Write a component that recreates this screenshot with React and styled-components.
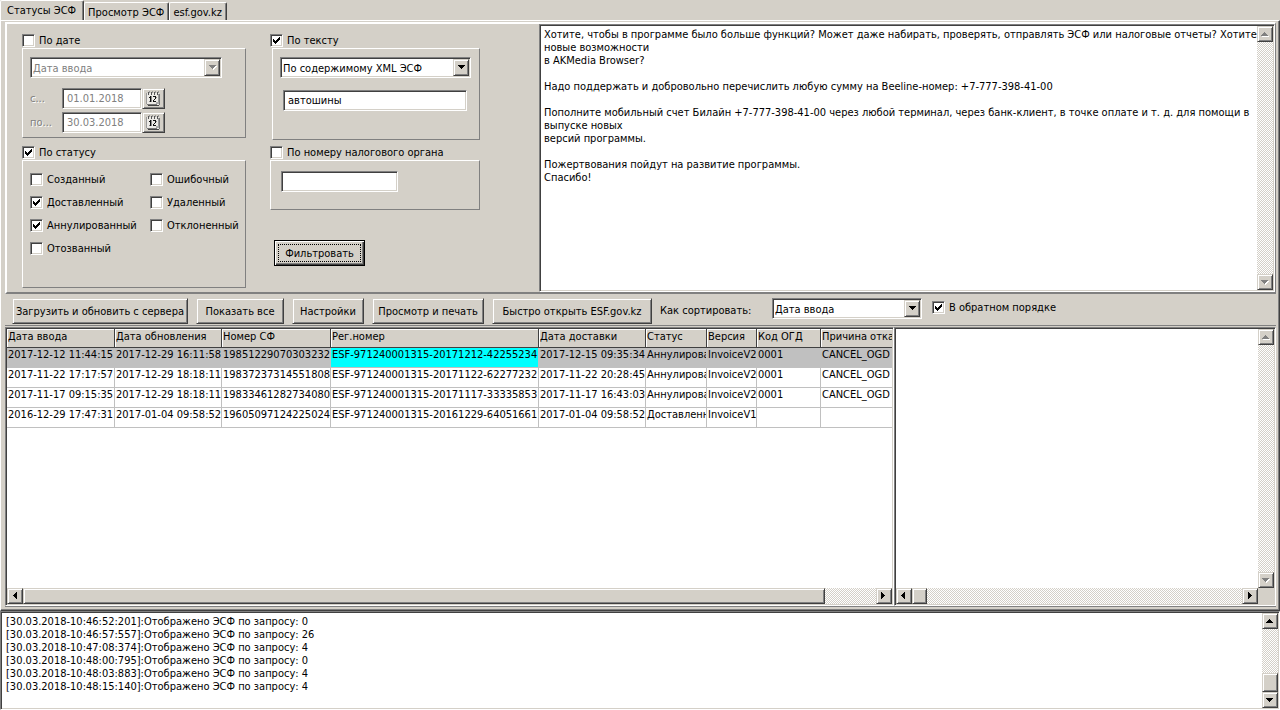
import styled, { createGlobalStyle, css } from 'styled-components';

const face = '#d4d0c8';
const shadow = '#808080';
const dark = '#404040';

const raised = css`
  border: 1px solid;
  border-color: ${face} ${dark} ${dark} ${face};
  box-shadow: inset 1px 1px #fff, inset -1px -1px ${shadow};
`;
const sunken = css`
  border: 1px solid;
  border-color: ${shadow} #fff #fff ${shadow};
  box-shadow: inset 1px 1px ${dark}, inset -1px -1px ${face};
`;

const rows = [
  ['2017-12-12 11:44:15', '2017-12-29 16:11:58', '19851229070303232', 'ESF-971240001315-20171212-42255234', '2017-12-15 09:35:34', 'Аннулированный', 'InvoiceV2', '0001', 'CANCEL_OGD'],
  ['2017-11-22 17:17:57', '2017-12-29 18:18:11', '19837237314551808', 'ESF-971240001315-20171122-62277232', '2017-11-22 20:28:45', 'Аннулированный', 'InvoiceV2', '0001', 'CANCEL_OGD'],
  ['2017-11-17 09:15:35', '2017-12-29 18:18:11', '19833461282734080', 'ESF-971240001315-20171117-33335853', '2017-11-17 16:43:03', 'Аннулированный', 'InvoiceV2', '0001', 'CANCEL_OGD'],
  ['2016-12-29 17:47:31', '2017-01-04 09:58:52', '19605097124225024', 'ESF-971240001315-20161229-64051661', '2017-01-04 09:58:52', 'Доставленный', 'InvoiceV1', '', ''],
];
const columns = [
  ['Дата ввода', 108],
  ['Дата обновления', 107],
  ['Номер СФ', 109],
  ['Рег.номер', 208],
  ['Дата доставки', 107],
  ['Статус', 61],
  ['Версия', 50],
  ['Код ОГД', 64],
  ['Причина отказа', 90],
];
const info = `Хотите, чтобы в программе было больше функций? Может даже набирать, проверять, отправлять ЭСФ или налоговые отчеты? Хотите
новые возможности
в AKMedia Browser?

Надо поддержать и добровольно перечислить любую сумму на Beeline-номер: +7-777-398-41-00

Пополните мобильный счет Билайн +7-777-398-41-00 через любой терминал, через банк-клиент, в точке оплате и т. д. для помощи в
выпуске новых
версий программы.

Пожертвования пойдут на развитие программы.
Спасибо!`;
const log = `[30.03.2018-10:46:52:201]:Отображено ЭСФ по запросу: 0
[30.03.2018-10:46:57:557]:Отображено ЭСФ по запросу: 26
[30.03.2018-10:47:08:374]:Отображено ЭСФ по запросу: 4
[30.03.2018-10:48:00:795]:Отображено ЭСФ по запросу: 0
[30.03.2018-10:48:03:883]:Отображено ЭСФ по запросу: 4
[30.03.2018-10:48:15:140]:Отображено ЭСФ по запросу: 4`;

const arrows = {
  up: '0,4 7,4 7,3 6,3 6,2 5,2 5,1 4,1 4,0 3,0 3,1 2,1 2,2 1,2 1,3 0,3',
  down: '0,0 7,0 7,1 6,1 6,2 5,2 5,3 4,3 4,4 3,4 3,3 2,3 2,2 1,2 1,1 0,1',
  left: '4,0 4,7 3,7 3,6 2,6 2,5 1,5 1,4 0,4 0,3 1,3 1,2 2,2 2,1 3,1 3,0',
  right: '0,0 0,7 1,7 1,6 2,6 2,5 3,5 3,4 4,4 4,3 3,3 3,2 2,2 2,1 1,1 1,0',
};

function Arrow({ dir, disabled }) {
  const tall = dir === 'left' || dir === 'right';
  const w = tall ? 5 : 8;
  const h = tall ? 8 : 5;
  return (
    <svg width={w} height={h} viewBox={`0 0 ${w} ${h}`} shapeRendering="crispEdges" aria-hidden="true">
      {disabled && <polygon points={arrows[dir]} fill="#fff" transform="translate(1 1)" />}
      <polygon points={arrows[dir]} fill={disabled ? shadow : '#000'} />
    </svg>
  );
}

function CalendarIcon() {
  return (
    <svg width="15" height="16" viewBox="0 0 15 16" shapeRendering="crispEdges" aria-hidden="true">
      <path d="M1 2h12v12H1z" fill="#eceae6" />
      <path d="M0 2h1v11H0zM12 3h1v8h-1z" fill="#999" />
      <path d="M13 3h1v11h-1zM1 13h10v1H1z" fill="#777" />
      <path d="M2 14h11v1H2z" fill="#444" />
      <path d="M10 11h3v2h-3z" fill="#aaa" />
      <path d="M2 1h1v3H2zM5 1h1v3H5zM8 1h1v3H8zM11 1h1v3h-1z" fill="#555" />
      <path d="M3 0h1v2H3zM6 0h1v2H6zM9 0h1v2H9zM12 0h1v2h-1z" fill="#999" />
      <path d="M4 5h1v6H4zM3 6h1v1H3zM7 5h3v1H7zM9 6h1v2H9zM8 8h1v1H8zM7 9h1v1H7zM7 10h3v1H7z" fill="#111" />
      <path d="M5 5h1v6H5zM10 6h1v1h-1zM3 10h1v1H3z" fill="#888" />
    </svg>
  );
}

function ScrollBar({ vertical, start, size, disabled }) {
  return (
    <Track $vertical={vertical}>
      <ScrollButton type="button" disabled={disabled} aria-label={vertical ? 'Вверх' : 'Влево'}>
        <Arrow dir={vertical ? 'up' : 'left'} disabled={disabled} />
      </ScrollButton>
      <Rail $vertical={vertical}>
        {size && <Space style={{ flexGrow: start }} />}
        {size && <Thumb style={{ flexGrow: size }} />}
        {size && <Space style={{ flexGrow: 100 - start - size }} />}
      </Rail>
      <ScrollButton type="button" disabled={disabled} aria-label={vertical ? 'Вниз' : 'Вправо'}>
        <Arrow dir={vertical ? 'down' : 'right'} disabled={disabled} />
      </ScrollButton>
    </Track>
  );
}

function Check({ label, checked }) {
  return (
    <CheckLabel>
      <CheckInput type="checkbox" defaultChecked={checked} />
      {label}
    </CheckLabel>
  );
}

function Combo({ id, label, value, width, disabled }) {
  return (
    <ComboBox $width={width}>
      <ComboSelect id={id} aria-label={label} disabled={disabled} defaultValue={value}>
        <option>{value}</option>
      </ComboSelect>
      <ComboArrow>
        <Arrow dir="down" disabled={disabled} />
      </ComboArrow>
    </ComboBox>
  );
}

function DateField({ id, label, value }) {
  return (
    <DateRow>
      <DateLabel htmlFor={id}>{label}</DateLabel>
      <TextInput id={id} $width={80} defaultValue={value} disabled />
      <DateButton type="button" aria-label="Календарь">
        <CalendarIcon />
      </DateButton>
    </DateRow>
  );
}

function App() {
  return (
    <Window>
      <GlobalStyle />
      <Tabs>
        <Tab type="button" $active>Статусы ЭСФ</Tab>
        <Tab type="button">Просмотр ЭСФ</Tab>
        <Tab type="button">esf.gov.kz</Tab>
      </Tabs>
      <Page>
        <TopPanel>
          <Filters>
            <FilterColumn $width={224}>
              <Check label="По дате" />
              <Group $height={90} $gap={8}>
                <Combo label="Дата" value="Дата ввода" width={192} disabled />
                <Dates>
                  <DateField id="from" label="с..." value="01.01.2018" />
                  <DateField id="to" label="по..." value="30.03.2018" />
                </Dates>
              </Group>
              <Check label="По статусу" checked />
              <Group $height={128}>
                <Statuses>
                  <Check label="Созданный" />
                  <Check label="Ошибочный" />
                  <Check label="Доставленный" checked />
                  <Check label="Удаленный" />
                  <Check label="Аннулированный" checked />
                  <Check label="Отклоненный" />
                  <Check label="Отозванный" />
                </Statuses>
              </Group>
            </FilterColumn>
            <FilterColumn $width={210}>
              <Check label="По тексту" checked />
              <Group $height={92} $gap={6} $indent={2}>
                <Combo label="Где искать" value="По содержимому XML ЭСФ" width={191} />
                <TextHolder>
                  <TextInput aria-label="Текст" $width={184} defaultValue="автошины" />
                </TextHolder>
              </Group>
              <Check label="По номеру налогового органа" />
              <Group $height={50}>
                <OfficeHolder>
                  <TextInput aria-label="Номер налогового органа" $width={117} />
                </OfficeHolder>
              </Group>
              <FilterButton type="button">
                <FocusRing>Фильтровать</FocusRing>
              </FilterButton>
            </FilterColumn>
          </Filters>
          <Memo>
            <MemoText aria-label="Сообщение" readOnly defaultValue={info} />
            <ScrollBar vertical disabled />
          </Memo>
        </TopPanel>
        <Toolbar>
          <ToolButton type="button" $width={176}>Загрузить и обновить с сервера</ToolButton>
          <ToolButton type="button" $width={88}>Показать все</ToolButton>
          <ToolButton type="button" $width={72}>Настройки</ToolButton>
          <ToolButton type="button" $width={112}>Просмотр и печать</ToolButton>
          <ToolButton type="button" $width={160}>Быстро открыть ESF.gov.kz</ToolButton>
          <SortLabel htmlFor="sort">Как сортировать:</SortLabel>
          <Combo id="sort" value="Дата ввода" width={150} />
          <OrderHolder>
            <Check label="В обратном порядке" checked />
          </OrderHolder>
        </Toolbar>
        <Split>
          <GridPane>
            <TableArea>
              <Table>
                <colgroup>
                  {columns.map(([name, width]) => <col key={name} style={{ width }} />)}
                </colgroup>
                <thead>
                  <tr>
                    {columns.map(([name]) => <Th key={name}>{name}</Th>)}
                  </tr>
                </thead>
                <tbody>
                  {rows.map((row, i) => (
                    <Tr key={row[2]} $selected={i === 0}>
                      {row.map((cell, j) => <Td key={j} $current={i === 0 && j === 3}>{cell}</Td>)}
                    </Tr>
                  ))}
                </tbody>
              </Table>
            </TableArea>
            <ScrollBar start={0} size={94} />
          </GridPane>
          <DetailPane>
            <DetailBody>
              <MemoText aria-label="Подробности" readOnly />
              <ScrollBar vertical disabled />
            </DetailBody>
            <DetailFoot>
              <ScrollBar start={0} size={4} />
            </DetailFoot>
          </DetailPane>
        </Split>
      </Page>
      <Log>
        <MemoText aria-label="Журнал" readOnly defaultValue={log} $inset={4} />
        <ScrollBar vertical start={72} size={28} />
      </Log>
    </Window>
  );
}

const GlobalStyle = createGlobalStyle`
  * {
    box-sizing: border-box;
  }
  body {
    margin: 0;
    background: ${face};
  }
  body, button, input, select, textarea {
    font-family: "DejaVu Sans Condensed", "DejaVu Sans", sans-serif;
    font-size: 11px;
    line-height: 13px;
    color: #000;
  }
`;
const Window = styled.div`
  display: flex;
  flex-direction: column;
  min-height: 100vh;
  background: ${face};
`;
const Tabs = styled.div`
  display: flex;
  align-items: flex-end;
  height: 20px;
`;
const Tab = styled.button`
  height: ${(p) => (p.$active ? 20 : 18)}px;
  padding: ${(p) => (p.$active ? '0 7px 0 6px' : '2px 4px 0 3px')};
  white-space: nowrap;
  background: ${face};
  border: 1px solid;
  border-color: #fff ${dark} transparent #fff;
  border-bottom: 0;
  border-radius: 2px 2px 0 0;
  box-shadow: inset -1px 0 ${shadow};
`;
const Page = styled.main`
  flex: 1;
  display: flex;
  flex-direction: column;
  padding: 1px 3px 3px 4px;
  border: 1px solid;
  border-color: #fff ${dark} ${dark} #fff;
  box-shadow: inset -1px -1px ${shadow};
`;
const TopPanel = styled.section`
  display: flex;
  height: 272px;
  border: 2px solid;
  border-color: #fff ${shadow} ${shadow} #fff;
  border-right-width: 1px;
`;
const Filters = styled.div`
  flex: 0 0 532px;
  display: flex;
  gap: 24px;
  padding: 10px 0 0 15px;
`;
const FilterColumn = styled.div`
  width: ${(p) => p.$width}px;
`;
const Group = styled.div`
  height: ${(p) => p.$height}px;
  margin: 1px 0 ${(p) => p.$gap || 0}px ${(p) => p.$indent || 0}px;
  padding: 8px 7px;
  border: 1px solid;
  border-color: #fff ${shadow} ${shadow} #fff;
`;
const CheckLabel = styled.label`
  display: flex;
  align-items: center;
  gap: 4px;
  height: 13px;
  white-space: nowrap;
`;
const CheckInput = styled.input`
  appearance: none;
  flex: none;
  width: 13px;
  height: 13px;
  margin: 0;
  background: #fff;
  ${sunken}

  &:checked {
    background: #fff url("data:image/svg+xml,%3Csvg xmlns='http://www.w3.org/2000/svg' width='7' height='7' shape-rendering='crispEdges'%3E%3Cpath d='M0 2h1v1h1v1h1V3h1V2h1V1h1V0h1v3H6v1H5v1H4v1H3v1H2V6H1V5H0z'/%3E%3C/svg%3E") 2px 2px no-repeat;
  }
`;
const ComboBox = styled.div`
  position: relative;
  width: ${(p) => p.$width}px;
  height: 21px;
`;
const ComboSelect = styled.select`
  appearance: none;
  display: block;
  width: 100%;
  height: 21px;
  padding: 1px 18px 0 2px;
  border-radius: 0;
  background: #fff;
  ${sunken}

  &:disabled {
    color: ${shadow};
    opacity: 1;
  }
`;
const ComboArrow = styled.span`
  position: absolute;
  top: 2px;
  right: 2px;
  display: flex;
  align-items: center;
  justify-content: center;
  width: 16px;
  height: 17px;
  padding-left: 1px;
  background: ${face};
  pointer-events: none;
  ${raised}
`;
const TextInput = styled.input`
  width: ${(p) => p.$width}px;
  height: 21px;
  padding: 0 4px;
  background: #fff;
  ${sunken}

  &:disabled {
    color: ${shadow};
  }
`;
const Dates = styled.div`
  display: flex;
  flex-direction: column;
  gap: 3px;
  margin-top: 10px;
`;
const DateRow = styled.div`
  display: flex;
  align-items: center;
`;
const DateLabel = styled.label`
  width: 32px;
  color: ${shadow};
  text-shadow: 1px 1px #fff;
`;
const DateButton = styled.button`
  display: flex;
  align-items: center;
  justify-content: center;
  width: 23px;
  height: 21px;
  padding: 0;
  background: ${face};
  ${raised}
`;
const Statuses = styled.div`
  display: grid;
  grid-template-columns: 116px 1fr;
  gap: 10px 4px;
  padding-top: 4px;
`;
const TextHolder = styled.div`
  padding: 12px 0 0 3px;
`;
const OfficeHolder = styled.div`
  padding: 2px 0 0 3px;
`;
const FilterButton = styled.button`
  display: block;
  width: 91px;
  height: 26px;
  margin: 30px 0 0 4px;
  padding: 2px;
  background: ${face};
  border: 1px solid #000;
  box-shadow: inset 1px 1px #fff, inset -1px -1px ${dark}, inset -2px -2px ${shadow};
`;
const FocusRing = styled.span`
  display: flex;
  align-items: center;
  justify-content: center;
  height: 18px;
  margin: 0 1px;
  border: 1px dotted #000;
`;
const Memo = styled.div`
  flex: 1;
  display: flex;
  min-width: 0;
  padding: 1px;
  background: #fff;
  ${sunken}
`;
const MemoText = styled.textarea`
  flex: 1;
  min-width: 0;
  display: block;
  padding: 2px 0 2px ${(p) => p.$inset || 3}px;
  border: 0;
  resize: none;
  overflow: hidden;
  white-space: pre;
  background: #fff;
  outline: 0;
`;
const Toolbar = styled.div`
  display: flex;
  align-items: flex-start;
  gap: 8px;
  height: 32px;
  padding: 4px 7px 0;
  border-bottom: 1px solid ${shadow};
`;
const ToolButton = styled.button`
  flex: none;
  width: ${(p) => p.$width}px;
  height: 26px;
  padding: 0;
  white-space: nowrap;
  background: ${face};
  ${raised}
`;
const SortLabel = styled.label`
  width: 104px;
  padding-top: 6px;
  white-space: nowrap;
`;
const OrderHolder = styled.div`
  padding: 3px 0 0 2px;
`;
const Split = styled.div`
  flex: 1;
  display: grid;
  grid-template-columns: minmax(0, 888fr) minmax(0, 382fr);
  margin-top: 1px;
  border-bottom: 1px solid ${shadow};
`;
const GridPane = styled.section`
  display: flex;
  flex-direction: column;
  min-width: 0;
  padding: 1px;
  background: #fff;
  ${sunken}
`;
const TableArea = styled.div`
  flex: 1;
  overflow: hidden;
`;
const Table = styled.table`
  width: 904px;
  table-layout: fixed;
  border-collapse: separate;
  border-spacing: 0;
`;
const Th = styled.th`
  height: 19px;
  padding: 1px 0 0 1px;
  overflow: hidden;
  font-weight: normal;
  text-align: left;
  vertical-align: top;
  white-space: nowrap;
  background: ${face};
  border-right: 1px solid ${dark};
  border-bottom: 1px solid ${dark};
  box-shadow: inset 1px 1px #fff;
`;
const Tr = styled.tr`
  background: ${(p) => (p.$selected ? '#c0c0c0' : '#fff')};
`;
const Td = styled.td`
  height: 20px;
  padding: 0 0 0 1px;
  overflow: hidden;
  vertical-align: top;
  white-space: nowrap;
  border-right: 1px solid #c0c0c0;
  border-bottom: 1px solid #c0c0c0;
  ${(p) => p.$current && 'background: #0ff;'}
`;
const DetailPane = styled.section`
  display: flex;
  flex-direction: column;
  min-width: 0;
  padding: 1px;
  background: #fff;
  ${sunken}
`;
const DetailBody = styled.div`
  flex: 1;
  display: flex;
`;
const DetailFoot = styled.div`
  padding-right: 16px;
  background: ${face};
`;
const Log = styled.section`
  display: flex;
  height: 99px;
  padding: 1px;
  background: #fff;
  ${sunken}
`;
const Track = styled.div`
  flex: none;
  display: flex;
  flex-direction: ${(p) => (p.$vertical ? 'column' : 'row')};
  ${(p) => (p.$vertical ? 'width: 16px;' : 'height: 16px;')}
  background: repeating-conic-gradient(#fff 0 25%, ${face} 0 50%) 0 0 / 2px 2px;
`;
const Rail = styled.div`
  flex: 1;
  display: flex;
  flex-direction: ${(p) => (p.$vertical ? 'column' : 'row')};
`;
const Space = styled.div`
  flex-basis: 0;
`;
const Thumb = styled.div`
  flex-basis: 0;
  background: ${face};
  ${raised}
`;
const ScrollButton = styled.button`
  flex: none;
  display: flex;
  align-items: center;
  justify-content: center;
  width: 16px;
  height: 16px;
  padding: 0;
  background: ${face};
  ${raised}
`;

export default App;
